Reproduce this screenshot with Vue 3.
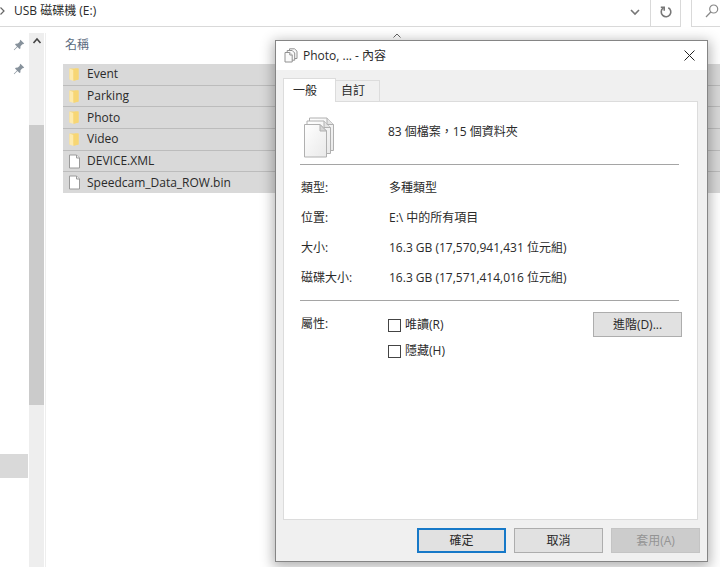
<script setup>
import { ref } from 'vue'

const files = [
  { name: 'Event', kind: 'folder' },
  { name: 'Parking', kind: 'folder' },
  { name: 'Photo', kind: 'folder' },
  { name: 'Video', kind: 'folder' },
  { name: 'DEVICE.XML', kind: 'file' },
  { name: 'Speedcam_Data_ROW.bin', kind: 'file' },
]

const details = [
  { label: '類型:', value: '多種類型' },
  { label: '位置:', value: 'E:\\ 中的所有項目' },
  { label: '大小:', value: '16.3 GB (17,570,941,431 位元組)' },
  { label: '磁碟大小:', value: '16.3 GB (17,571,414,016 位元組)' },
]

const readOnly = ref(false)
const hidden = ref(false)
</script>

<template>
  <div class="desktop">
    <header class="toolbar">
      <div class="address">
        <svg class="crumb" viewBox="0 0 6 10" aria-hidden="true"><path d="M.5 1.5 4 5 .5 8.5" /></svg>
        <span class="path">USB 磁碟機 (E:)</span>
        <button class="tool history" aria-label="history">
          <svg viewBox="0 0 10 8" width="10" height="8"><path d="M1 2 5 6 9 2" /></svg>
        </button>
        <button class="tool refresh" aria-label="refresh">
          <svg viewBox="0 0 14 14" width="14" height="14">
            <path d="M9.3 2.7A4.8 4.8 0 1 1 4 3.2M1.8 2.2H5.2V5.8" />
          </svg>
        </button>
      </div>
      <div class="search">
        <svg viewBox="0 0 14 14" width="14" height="14"><circle cx="8.7" cy="5" r="4" /><path d="M5.8 8 1 13" /></svg>
      </div>
    </header>

    <div class="explorer">
      <nav class="side">
        <svg v-for="n in 2" :key="n" class="pin" viewBox="0 0 12 12" aria-hidden="true">
          <path d="M7.4.8 11.2 4.6 10 5.3 9.4 5.2 7.5 7.2 7.4 9.4 6.5 10 4.5 8 1.2 11.2.8 10.8 4 7.5 2 5.5 2.7 4.7 4.8 4.6 6.8 2.7 6.7 2Z" />
        </svg>
        <div class="current"></div>
      </nav>
      <div class="scrollbar">
        <svg viewBox="0 0 10 8" width="10" height="8"><path d="M1.5 6 5 2 8.5 6" /></svg>
        <div class="thumb"></div>
      </div>
      <main class="content">
        <div class="columns">
          <span>名稱</span>
          <svg viewBox="0 0 8 5" width="8" height="5"><path d="M.5 4.5 4 1 7.5 4.5" /></svg>
        </div>
        <ul class="files">
          <li v-for="f in files" :key="f.name">
            <svg v-if="f.kind === 'folder'" class="icon" viewBox="0 0 13 15" aria-hidden="true">
              <path d="M1.5 1.5H10.5V12.5H1.5Z" fill="#f7d674" />
              <path d="M1.5 1.5 5.5 3V14L1.5 12.5Z" fill="#fdeaae" />
              <path d="M5.5 3 7 1.5H10.5V12.5L5.5 14Z" fill="#f7d674" />
            </svg>
            <svg v-else class="icon" viewBox="0 0 13 15" aria-hidden="true">
              <path d="M1.5 1H8.5L11.5 4V14H1.5Z" fill="#fff" stroke="#9a9a9a" />
              <path d="M8.5 1V4H11.5" fill="#eee" stroke="#9a9a9a" />
            </svg>
            <span>{{ f.name }}</span>
          </li>
        </ul>
      </main>
    </div>

    <section class="dialog" role="dialog" aria-labelledby="dialog-title">
      <div class="titlebar">
        <svg class="mini" viewBox="0 0 14 15" aria-hidden="true">
          <g fill="#fafafa" stroke="#929292">
            <path d="M5.5.8H10.5L13 3.2V10.5H5.5Z" />
            <path d="M3.2 2.5H8.2L10.7 5V12.2H3.2Z" />
            <path d="M1 4.5H5.8L8.2 7V14H1Z" />
            <path d="M5.8 4.5V7H8.2" />
          </g>
        </svg>
        <span id="dialog-title">Photo, ... - 內容</span>
        <button class="close" aria-label="close">
          <svg viewBox="0 0 11 11" width="11" height="11"><path d="M.5.5 10.5 10.5M10.5.5.5 10.5" /></svg>
        </button>
      </div>

      <div class="body">
        <div class="tabs" role="tablist">
          <button class="tab active" role="tab" aria-selected="true">一般</button>
          <button class="tab" role="tab" aria-selected="false">自訂</button>
        </div>
        <div class="panel">
          <div class="summary">
            <svg class="stack" viewBox="0 0 32 42" aria-hidden="true">
              <defs>
                <linearGradient id="paper" x1="0" y1="0" x2="1" y2="1">
                  <stop offset="0" stop-color="#fff" />
                  <stop offset="1" stop-color="#e9e9e9" />
                </linearGradient>
              </defs>
              <g fill="url(#paper)" stroke="#b0b0b0" stroke-linejoin="round">
                <path d="M6.5 2H24L30.5 8.5V34.5H6.5Z" />
                <path d="M4 5H21L27.5 11.5V37.5H4Z" />
                <path d="M24 2V8.5H30.5M21 5V11.5H27.5" fill="#e4e4e4" />
                <path d="M1.5 8.5H17L23.5 15V41H1.5Z" />
                <path d="M17 8.5V15H23.5Z" fill="#d5d5d5" />
              </g>
            </svg>
            <span>83 個檔案，15 個資料夾</span>
          </div>
          <dl class="details">
            <template v-for="d in details" :key="d.label">
              <dt>{{ d.label }}</dt>
              <dd>{{ d.value }}</dd>
            </template>
          </dl>
          <div class="attributes">
            <span class="caption">屬性:</span>
            <div class="checks">
              <label><input v-model="readOnly" type="checkbox" />唯讀(R)</label>
              <label><input v-model="hidden" type="checkbox" />隱藏(H)</label>
            </div>
            <button class="btn">進階(D)...</button>
          </div>
        </div>
        <div class="actions">
          <button class="btn primary">確定</button>
          <button class="btn">取消</button>
          <button class="btn" disabled>套用(A)</button>
        </div>
      </div>
    </section>
  </div>
</template>

<style>
body {
  margin: 0;
  background: #fff;
}
</style>

<style scoped>
* {
  box-sizing: border-box;
}
.desktop {
  position: relative;
  display: flex;
  flex-direction: column;
  min-height: 100vh;
  overflow: hidden;
  color: #2a2a2a;
  font: 12px/16px 'Open Sans', 'Noto Sans CJK TC', sans-serif;
}
button {
  margin: 0;
  padding: 0;
  border: 0;
  background: none;
  color: inherit;
  font: inherit;
}
svg {
  flex: none;
  fill: none;
}
.toolbar {
  display: flex;
  gap: 10px;
  height: 27px;
}
.address {
  display: flex;
  flex: 1;
  align-items: center;
  border: solid #d9d9d9;
  border-width: 0 1px 1px 0;
}
.crumb {
  width: 6px;
  height: 10px;
  margin: 0 8px 4px 0;
  stroke: #666;
  stroke-width: 1.2;
}
.path {
  flex: 1;
  padding-bottom: 4px;
}
.tool {
  display: grid;
  place-items: center;
  align-self: stretch;
  width: 30px;
  padding-bottom: 2px;
  stroke: #777;
  stroke-width: 1.6;
}
.refresh {
  border-left: 1px solid #d9d9d9;
}
.search {
  width: 29px;
  padding: 4px 13px;
  border: solid #d9d9d9;
  border-width: 0 0 1px 1px;
  stroke: #888;
  stroke-width: 1.2;
}
.explorer {
  display: flex;
  flex: 1;
  padding-top: 6px;
}
.side {
  display: flex;
  flex-direction: column;
  align-items: flex-end;
  gap: 12px;
  width: 28px;
  padding-top: 6px;
}
.pin {
  width: 12px;
  height: 12px;
  margin-right: 3px;
  fill: #87929c;
}
.current {
  width: 100%;
  height: 24px;
  margin-top: 367px;
  background: #d9d9d9;
}
.scrollbar {
  display: flex;
  flex-direction: column;
  align-items: center;
  gap: 80px;
  width: 15px;
  margin-left: 1px;
  padding-top: 4px;
  background: #eee;
  stroke: #444;
  stroke-width: 1.6;
}
.thumb {
  width: 100%;
  height: 280px;
  background: #cbcbcb;
}
.content {
  flex: 1;
  margin-left: 1px;
  padding-left: 17px;
  border-left: 1px solid #eee;
}
.columns {
  display: flex;
  height: 31px;
  padding: 4px 0 0 2px;
  color: #5b6b80;
}
.columns span {
  width: 328px;
}
.columns svg {
  margin-top: -4px;
  stroke: #666;
}
.files {
  display: flex;
  flex-direction: column;
  height: 129px;
  margin: 0;
  padding: 0;
  list-style: none;
  background: #d9d9d9;
}
.files li {
  display: flex;
  flex: 1;
  align-items: center;
  gap: 6px;
  padding-left: 5px;
}
.files li + li {
  border-top: 1px solid #bcbcbc;
}
.icon {
  width: 13px;
  height: 15px;
}
.dialog {
  position: absolute;
  top: 40px;
  right: 12px;
  left: 275px;
  border: 1px solid #858585;
  background: #f0f0f0;
  box-shadow: 0 3px 12px 2px rgba(0, 0, 0, 0.3);
}
.titlebar {
  display: flex;
  align-items: center;
  gap: 5px;
  height: 29px;
  padding: 0 12px 0 8px;
  background: #fff;
}
.mini {
  width: 14px;
  height: 15px;
}
.close {
  display: grid;
  place-items: center;
  width: 11px;
  height: 11px;
  margin-left: auto;
  stroke: #222;
}
.body {
  padding: 8px 7px;
}
.tabs {
  display: flex;
  align-items: flex-end;
}
.tab {
  width: 44px;
  height: 21px;
  padding-right: 9px;
  border: 1px solid #dcdcdc;
  border-width: 1px 1px 0 0;
}
.tab.active {
  position: relative;
  width: 53px;
  height: 24px;
  margin-bottom: -1px;
  border-left-width: 1px;
  background: #fff;
}
.panel {
  min-height: 419px;
  margin-right: 2px;
  padding: 14px 15px 14px 16px;
  border: 1px solid #dcdcdc;
  background: #fff;
}
.summary {
  display: flex;
  gap: 53px;
  height: 49px;
  margin-right: 3px;
  padding-left: 3px;
  border-bottom: 1px solid #a5a5a5;
}
.summary span {
  padding-top: 8px;
}
.stack {
  width: 32px;
  height: 42px;
}
.details {
  display: grid;
  grid-template-columns: 88px 1fr;
  gap: 14px 0;
  margin: 0 3px 0 0;
  padding: 15px 0 14px 1px;
  border-bottom: 1px solid #a5a5a5;
}
.details dd {
  margin: 0;
}
.attributes {
  display: flex;
  align-items: flex-start;
  padding: 11px 0 0 1px;
}
.caption {
  width: 87px;
  padding-top: 4px;
}
.checks {
  display: grid;
  flex: 1;
  gap: 10px;
  padding-top: 5px;
}
.checks label {
  display: flex;
  align-items: center;
  gap: 4px;
}
.checks input {
  appearance: none;
  width: 13px;
  height: 13px;
  margin: 0;
  border: 1px solid #444;
  background: #fff;
}
.checks input:checked {
  background: #0078d7;
}
.btn {
  width: 89px;
  height: 25px;
  border: 1px solid #adadad;
  background: #e1e1e1;
}
.btn.primary {
  border: 2px solid #1779c8;
}
.btn:disabled {
  border-color: #c4c4c4;
  background: #ccc;
  color: #949494;
}
.actions {
  display: flex;
  justify-content: flex-end;
  gap: 8px;
  padding-top: 8px;
}
</style>
